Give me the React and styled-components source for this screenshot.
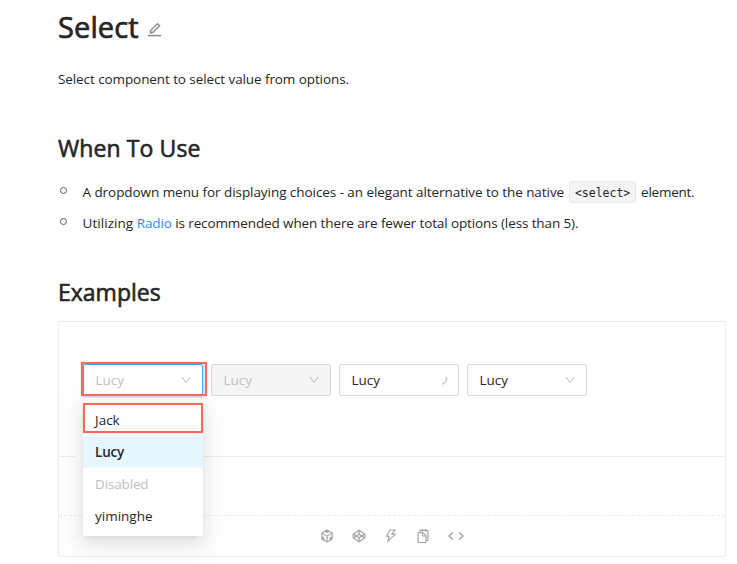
import React from "react";
import styled, { createGlobalStyle, css } from "styled-components";
import {
  AiOutlineEdit,
  AiOutlineDown,
  AiOutlineCodeSandbox,
  AiOutlineCodepen,
  AiOutlineThunderbolt,
  AiOutlineSnippets,
} from "react-icons/ai";

const GlobalStyle = createGlobalStyle`
  *, *::before, *::after { box-sizing: border-box; }
  html, body { margin: 0; background: #fff; }
  body {
    height: 564px;
    overflow: hidden;
    font-family: "Open Sans", "Noto Sans", sans-serif;
    font-size: 13.5px;
    color: #262626;
  }
`;

const Page = styled.main`
  height: 564px;
  padding: 7px 11px 0 58px;
`;

const Title = styled.h1`
  display: flex;
  align-items: center;
  height: 38px;
  margin: 0;
  font-size: 29px;
  font-weight: 500;
  color: #262626;
  white-space: nowrap;
  -webkit-text-stroke: 0.7px #262626;
`;

const Label = styled.span`
  letter-spacing: ${(p) => p.$track || 0}px;
  white-space: pre;
`;

const EditLink = styled.span`
  display: flex;
  margin: 7px 0 0 7px;
  color: #8c8c8c;
  svg { stroke-width: 14; }
`;

const Intro = styled.p`
  height: 28px;
  margin: 20px 0 0;
  line-height: 28px;
`;

const Heading = styled.h2`
  height: 32px;
  margin: ${(p) => p.$top}px 0 0;
  font-size: 23px;
  line-height: 32px;
  font-weight: 500;
  color: #262626;
  -webkit-text-stroke: 0.6px #262626;
`;

const List = styled.ul`
  display: flex;
  flex-direction: column;
  gap: 3px;
  margin: 14px 0 0;
  padding: 0;
  list-style: none;
`;

const Item = styled.li`
  display: flex;
  align-items: center;
  height: 28px;

  &::before {
    content: "";
    width: 7px;
    height: 7px;
    margin: 0 15.5px 3px 2px;
    border: 1.5px solid #595959;
    border-radius: 50%;
  }
`;

const Code = styled.code`
  display: flex;
  align-items: center;
  justify-content: center;
  width: 67px;
  height: 22px;
  margin: 0 5px;
  padding-top: 1px;
  border: 1px solid #e6e9ec;
  border-radius: 3px;
  background: #f2f4f5;
  font-family: "DejaVu Sans Mono", monospace;
  font-size: 11.5px;
`;

const Link = styled.a`
  color: #1890ff;
`;

const Demo = styled.section`
  height: 236px;
  margin-top: 13px;
  border: 1px solid #ebedf0;
  border-radius: 2px;
`;

const Selects = styled.div`
  display: flex;
  gap: 8px;
  height: 134px;
  padding: 42px 24px 0;
`;

const Caption = styled.div`
  height: 60px;
  border-top: 1px solid #ebedf0;
  border-bottom: 1px dashed #ebedf0;

  &::before {
    content: "";
    display: block;
    width: 100px;
    height: 1px;
    margin: -1px 0 0 16px;
    background: #fff;
  }
`;

const Slot = styled.div`
  position: relative;
  width: 120px;
  height: 32px;
`;

const SelectBox = styled.div`
  display: flex;
  align-items: center;
  justify-content: space-between;
  width: 120px;
  height: 32px;
  padding: 0 10px 0 11.5px;
  border: 1px solid #d9d9d9;
  border-radius: 2px;
  background: #fff;
  svg { color: #bfbfbf; }
  ${(p) => p.$disabled && css`
    background: #f5f5f5;
    color: #bfbfbf;
  `}
  ${(p) => p.$open && css`
    border-color: #40a9ff;
    box-shadow: 0 0 0 2px rgba(24, 144, 255, 0.2);
    color: #bfbfbf;
  `}
`;

const Menu = styled.div`
  position: absolute;
  top: 36px;
  left: 0;
  width: 120px;
  height: 136px;
  padding: 4px 0;
  border-radius: 2px;
  background: #fff;
  box-shadow: 0 3px 6px -4px rgba(0, 0, 0, 0.12), 0 6px 16px rgba(0, 0, 0, 0.08),
    0 9px 28px 8px rgba(0, 0, 0, 0.05);
`;

const Option = styled.div`
  height: 32px;
  padding-left: 12px;
  line-height: 32px;
  color: ${(p) => (p.$disabled ? "#bfbfbf" : "#262626")};
  background: ${(p) => (p.$selected ? "#e6f7ff" : "transparent")};
  font-weight: ${(p) => (p.$selected ? 600 : 400)};
`;

const Highlight = styled.div`
  position: absolute;
  top: ${(p) => p.$top}px;
  left: ${(p) => p.$left}px;
  width: ${(p) => p.$width}px;
  height: ${(p) => p.$height}px;
  border: 2px solid #f8695c;
  box-shadow: 0 0 1px rgba(248, 105, 92, 0.6);
`;

const Actions = styled.footer`
  display: flex;
  align-items: center;
  justify-content: center;
  gap: 16px;
  height: 40px;
  color: #a3a3a3;
  svg { display: block; }
`;

function CodeIcon() {
  return (
    <svg width="18" height="16" viewBox="0 0 18 16" fill="none" stroke="currentColor" strokeWidth="1.5">
      <path d="M6 4.5 2 8l4 3.5M12 4.5 16 8l-4 3.5" />
    </svg>
  );
}

function Spinner() {
  return (
    <svg width="8" height="12" viewBox="0 0 8 12" fill="none" stroke="#c4c4c4" strokeWidth="1.3">
      <path d="M6 2.5C7.6 5.3 6.2 8.7 2.2 10.3" />
    </svg>
  );
}

export default function App() {
  return (
    <>
      <GlobalStyle />
      <Page>
        <Title>
          <Label $track={0.1}>Select</Label>
          <EditLink><AiOutlineEdit size={17} /></EditLink>
        </Title>
        <Intro><Label $track={-0.09}>Select component to select value from options.</Label></Intro>
        <Heading $top={39}><Label $track={0.1}>When To Use</Label></Heading>
        <List>
          <Item>
            <Label $track={-0.06}>A dropdown menu for displaying choices - an elegant alternative to the native</Label>
            <Code>&lt;select&gt;</Code>
            <Label $track={-0.25}>element.</Label>
          </Item>
          <Item>
            <Label $track={-0.11}><Label $track={0.05}>Utilizing </Label><Link>Radio</Link> is recommended when there are fewer total options (less than 5).</Label>
          </Item>
        </List>
        <Heading $top={39}><Label>Examples</Label></Heading>
        <Demo>
          <Selects>
            <Slot>
              <SelectBox $open><Label>Lucy</Label><AiOutlineDown size={12} /></SelectBox>
              <Menu>
                <Option><Label>Jack</Label></Option>
                <Option $selected><Label $track={-0.2}>Lucy</Label></Option>
                <Option $disabled><Label $track={-0.15}>Disabled</Label></Option>
                <Option><Label>yiminghe</Label></Option>
              </Menu>
              <Highlight $top={-2} $left={-2} $width={126} $height={34} />
              <Highlight $top={39} $left={0} $width={120} $height={30} />
            </Slot>
            <SelectBox $disabled><Label>Lucy</Label><AiOutlineDown size={12} /></SelectBox>
            <SelectBox><Label>Lucy</Label><Spinner /></SelectBox>
            <SelectBox><Label>Lucy</Label><AiOutlineDown size={12} /></SelectBox>
          </Selects>
          <Caption />
          <Actions>
            <AiOutlineCodeSandbox size={16} strokeWidth={16} />
            <AiOutlineCodepen size={16} strokeWidth={16} />
            <AiOutlineThunderbolt size={16} />
            <AiOutlineSnippets size={16} />
            <CodeIcon />
          </Actions>
        </Demo>
      </Page>
    </>
  );
}
